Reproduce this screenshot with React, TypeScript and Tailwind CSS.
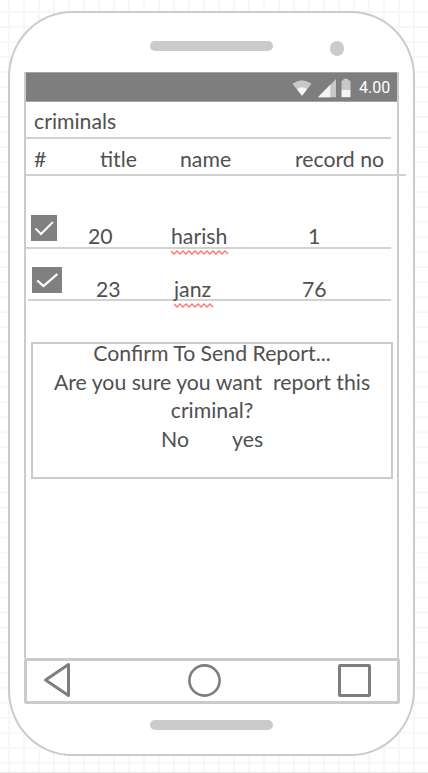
import type { ReactNode } from 'react';

function Speaker() {
  return <div className="h-[10px] w-[123px] rounded-full bg-[#cbcbcb]" />;
}

function StatusBar() {
  return (
    <div className="flex h-[30px] items-center border-y border-[#a5a5a5] bg-[#7e7e7e]">
      <svg className="ml-[265px] mt-px h-[20px] w-[62px] shrink-0" viewBox="0 0 62 20">
        <path d="M1.5 5.8Q11 -1.2 20.5 5.8L11 17.8Z" fill="#c8c8c8" />
        <path d="M6 11.2Q11 7.2 16 11.2L11 17.8Z" fill="#f5f5f5" />
        <path d="M27 19.2L45 1V19.2Z" fill="#c8c8c8" />
        <path d="M27 19.2L39.3 6.7V19.2Z" fill="#f5f5f5" />
        <path d="M50.5 3.5Q50.5 2.2 52.5 2.2V.8H57V2.2Q59.5 2.2 59.5 3.5V12.5H50.5Z" fill="#c8c8c8" />
        <path d="M50.5 12H59.5V19.2H50.5Z" fill="#f5f5f5" />
      </svg>
      <span className="ml-[6px] mt-px font-['Roboto',sans-serif] text-[16px] leading-5 text-white">4.00</span>
    </div>
  );
}

function CheckBox({ className }: { className: string }) {
  return (
    <svg className={`shrink-0 bg-[#808080] ${className}`} viewBox="0 0 26 26" preserveAspectRatio="none">
      <path d="M4.5 13.5L10 19L22 7" fill="none" stroke="white" strokeWidth="2" />
    </svg>
  );
}

function Misspelled({ children, width }: { children: ReactNode; width: number }) {
  const points = Array.from({ length: Math.floor(width / 3) + 1 }, (_, i) => `${i * 3},${i % 2 ? 4 : 1}`).join(' ');
  return (
    <span className="relative">
      {children}
      <svg className="absolute left-0 top-[27px] h-[5px]" width={width} viewBox={`0 0 ${width} 5`}>
        <polyline points={points} fill="none" stroke="#ff7373" strokeWidth="1.4" />
      </svg>
    </span>
  );
}

export default function App() {
  return (
    <div className="h-[773px] w-[428px] overflow-hidden border-b border-[#e8e8e8] bg-white bg-[linear-gradient(to_right,#f7f7f7_2px,transparent_2px),linear-gradient(to_bottom,#f7f7f7_2px,transparent_2px)] bg-[length:15px_15.02px] bg-[position:8px_11px] pl-[8px] pt-[11px] font-['Lato',sans-serif] text-[21.25px] leading-[28.6px] text-[#505050]">
      <div className="h-[745px] w-[407px] rounded-[64px/66px] border-2 border-[#cbcbcb] bg-white">
        <div className="flex h-[59px] items-start pl-[140px] pt-[28px]">
          <Speaker />
          <div className="ml-[57px] h-[15px] w-[14px] rounded-full bg-[#cbcbcb]" />
        </div>
        <div className="ml-[14px] h-[586px] w-[375px] border-x-2 border-t border-[#cbcbcb]">
          <div className="-mt-px">
            <StatusBar />
          </div>
          <div className="h-[37px] w-[365px] border-b-2 border-[#d2d2d2] pl-[8px] pt-[5px]">criminals</div>
          <div className="flex h-[37px] w-[380px] border-b-2 border-[#d2d2d2] pl-[8px] pt-[6px]">
            <span className="w-[66px]">#</span>
            <span className="w-[80px]">title</span>
            <span className="w-[115px]">name</span>
            <span className="whitespace-nowrap">record no</span>
          </div>
          <div className="flex h-[73px] w-[365px] border-b-2 border-[#d2d2d2] pl-[5px] pt-[46px]">
            <CheckBox className="-mt-[7px] h-[26px] w-[26px]" />
            <span className="ml-[31px] w-[83px]">20</span>
            <span className="w-[137px]"><Misspelled width={58}>harish</Misspelled></span>
            <span>1</span>
          </div>
          <div className="ml-[2px] flex h-[52px] w-[363px] border-b-2 border-[#d2d2d2] pl-[4px] pt-[26px]">
            <CheckBox className="-mt-[8px] h-[26px] w-[30px]" />
            <span className="ml-[34px] w-[78px]">23</span>
            <span className="w-[128px]"><Misspelled width={40}>janz</Misspelled></span>
            <span>76</span>
          </div>
          <div className="ml-[5px] mt-[41px] h-[137px] w-[362px] whitespace-pre border-2 border-[#cbcbcb] text-center">
            <div className="-mt-[5px] h-[29px]">Confirm To Send Report...</div>
            <div className="h-[28px]">Are you sure you want  report this</div>
            <div className="h-[29px]">criminal?</div>
            <div className="flex pl-[128px]">
              <span className="w-[71px] text-left">No</span>
              <span>yes</span>
            </div>
          </div>
        </div>
        <div className="ml-[14px] flex h-[46px] w-[376px] items-start rounded-[2px] border-[3px] border-[#cbcbcb] bg-white pt-[3px]">
          <svg className="-mt-[2px] ml-[16px] h-[36px] w-[30px]" viewBox="0 0 30 36">
            <path d="M25.5 2.5V33.5L2.5 18Z" fill="none" stroke="#7e7e7e" strokeWidth="3" strokeLinejoin="round" />
          </svg>
          <svg className="ml-[115px] h-[33px] w-[33px]" viewBox="0 0 33 33">
            <circle cx="16.5" cy="16.5" r="15.1" fill="none" stroke="#7e7e7e" strokeWidth="2.6" />
          </svg>
          <div className="ml-[117px] h-[33px] w-[33px] rounded-[2px] border-[3px] border-[#7e7e7e]" />
        </div>
        <div className="ml-[140px] mt-[16px]">
          <Speaker />
        </div>
      </div>
    </div>
  );
}
